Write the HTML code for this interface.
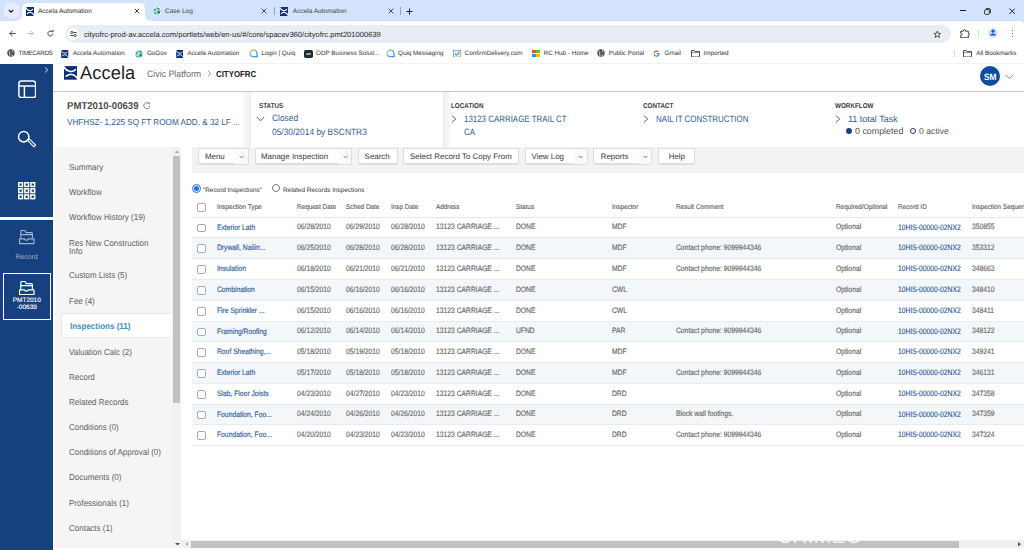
<!DOCTYPE html>
<html><head><meta charset="utf-8">
<style>
*{margin:0;padding:0;box-sizing:border-box}
html,body{width:1024px;height:550px;overflow:hidden;background:#fff;font-family:"Liberation Sans",sans-serif;position:relative;text-rendering:geometricPrecision}
.a{position:absolute;white-space:nowrap}
/* chrome */
#tabs{position:absolute;left:0;top:0;width:1024px;height:25px;background:#d3e3fd}
#toolbar{position:absolute;left:0;top:21px;width:1024px;height:22px;background:#fff;border-radius:0 4px 0 0}
#bm{position:absolute;left:0;top:43px;width:1024px;height:21px;background:#fff}
.tt{font-size:6.5px;color:#1f1f1f;top:8px}
.bt{font-size:6.3px;color:#333;margin-top:0.5px}
/* app */
#side{position:absolute;left:0;top:64px;width:53px;height:486px;background:#17407e}
#hdr{position:absolute;left:53px;top:64px;width:971px;height:28px;background:#fff;border-bottom:1px solid #c8c9d1}
#nav{position:absolute;left:55px;top:147px;width:126.2px;height:401px;background:#f5f5f5}
.nv{font-size:8.7px;color:#5e5e5e;transform:scaleX(0.92);transform-origin:0 0;margin-top:-0.2px}
.lbl{font-size:7px;font-weight:bold;color:#3a3a3a;transform:scaleX(0.9);transform-origin:0 0}
.hv{font-size:9.2px;transform-origin:0 0}
.lnk,.cell.lnk{color:#2f5d98}
.cell.lnk{margin-top:0.3px}
.btn{position:absolute;top:148px;height:17px;background:#fff;border:1px solid #d9d9d9;border-radius:1px;font-size:7.2px;color:#333;line-height:15px;padding-left:9px}
.th{-webkit-text-stroke:0.12px currentColor;font-size:6.8px;color:#606060;top:203.8px;transform:scaleX(0.94);transform-origin:0 0}
.row{position:absolute;left:192px;width:832px;height:20.8px;border-bottom:1px solid #e8ebef}
.row.alt{background:#f4f7fa}
.cell{-webkit-text-stroke:0.15px currentColor;position:absolute;font-size:7.9px;color:#666;white-space:nowrap;top:4.8px;transform:scaleX(0.855);transform-origin:0 0}
.cb{position:absolute;left:5px;top:6px;width:9px;height:8.8px;border:1.2px solid #ababab;border-radius:2px;background:#fff}
</style></head><body>

<div id="tabs">
  <div class="a" style="left:3.5px;top:3px;width:15px;height:15px;border-radius:5px;background:#e6eefc"></div>
  <svg class="a" style="left:7px;top:7px" width="8" height="8" viewBox="0 0 8 8"><path d="M1.8 3 L4 5.2 L6.2 3" fill="none" stroke="#1f1f1f" stroke-width="1.1"/></svg>
  <svg class="a" style="left:14px;top:0" width="140" height="21" viewBox="0 0 140 21"><path d="M0 21 Q8 21 8 15 L8 9 Q8 3 14 3 L125 3 Q131 3 131 9 L131 15 Q131 21 139 21 Z" fill="#fff"/></svg>
  <svg class="a" style="left:26px;top:6.5px" width="8" height="9" viewBox="0 0 8 9"><rect width="8" height="9" fill="#0e2f7a"/><path d="M-0.3 0.3 C1.4 3.8, 4.9 4.7, 7 2.1 M1 6.9 C3.1 4.3, 6.6 5.2, 8.3 8.7" stroke="#fff" stroke-width="1.1" fill="none"/></svg>
  <div class="a tt" style="left:38px">Accela Automation</div>
  <svg class="a" style="left:133.5px;top:8px" width="6" height="6" viewBox="0 0 6 6"><path d="M0.8 0.8 L5.2 5.2 M5.2 0.8 L0.8 5.2" stroke="#1f1f1f" stroke-width="0.85"/></svg>
  <svg class="a" style="left:152.8px;top:6.7px" width="8" height="8" viewBox="0 0 8 8"><rect x="0" y="0" width="8" height="8" fill="#fff" rx="0.8"/><circle cx="4" cy="4" r="3.7" fill="#8fcfc4"/><ellipse cx="2.2" cy="3.3" rx="1.2" ry="1.1" fill="#18897a"/><ellipse cx="5.2" cy="1.9" rx="1.1" ry="0.8" fill="#18897a"/><ellipse cx="5.6" cy="5.2" rx="1.3" ry="1.2" fill="#0f7a6b"/><ellipse cx="2.6" cy="6.3" rx="1.2" ry="0.8" fill="#18897a"/><path d="M5 3.2 A1.6 1.6 0 1 0 4.6 5.8" stroke="#fff" stroke-width="0.9" fill="none"/></svg>
  <div class="a tt" style="left:165px;color:#3c3c3c">Case Log</div>
  <svg class="a" style="left:261px;top:8px" width="6" height="6" viewBox="0 0 6 6"><path d="M0.6 0.6 L5.4 5.4 M5.4 0.6 L0.6 5.4" stroke="#3c3c3c" stroke-width="0.9"/></svg>
  <div class="a" style="left:273.5px;top:7px;width:1px;height:8px;background:#8aa6d8"></div>
  <svg class="a" style="left:280px;top:6.5px" width="8" height="9" viewBox="0 0 8 9"><rect width="8" height="9" fill="#0e2f7a"/><path d="M-0.3 0.3 C1.4 3.8, 4.9 4.7, 7 2.1 M1 6.9 C3.1 4.3, 6.6 5.2, 8.3 8.7" stroke="#fff" stroke-width="1.1" fill="none"/></svg>
  <div class="a tt" style="left:292.8px;color:#3c3c3c">Accela Automation</div>
  <svg class="a" style="left:387.5px;top:8px" width="6" height="6" viewBox="0 0 6 6"><path d="M0.6 0.6 L5.4 5.4 M5.4 0.6 L0.6 5.4" stroke="#3c3c3c" stroke-width="0.9"/></svg>
  <div class="a" style="left:400px;top:7px;width:1px;height:8px;background:#8aa6d8"></div>
  <svg class="a" style="left:406px;top:7.5px" width="7" height="7" viewBox="0 0 7 7"><path d="M3.5 0.5 L3.5 6.5 M0.5 3.5 L6.5 3.5" stroke="#1f1f1f" stroke-width="1"/></svg>
  <div class="a" style="left:960px;top:10.2px;width:6px;height:1px;background:#1f1f1f"></div>
  <svg class="a" style="left:984px;top:8px" width="7" height="7" viewBox="0 0 7 7"><rect x="0.6" y="1.6" width="4.8" height="4.8" rx="1" fill="none" stroke="#1f1f1f" stroke-width="0.9"/><path d="M2 0.6 L5 0.6 Q6.4 0.6 6.4 2 L6.4 5" fill="none" stroke="#1f1f1f" stroke-width="0.9"/></svg>
  <svg class="a" style="left:1008.5px;top:8px" width="6.5" height="6.5" viewBox="0 0 6 6"><path d="M0.4 0.4 L5.6 5.6 M5.6 0.4 L0.4 5.6" stroke="#1f1f1f" stroke-width="0.9"/></svg>
</div>
<div id="toolbar">
  <svg class="a" style="left:8.5px;top:9px" width="7" height="7" viewBox="0 0 7 7"><path d="M6.6 3.5 L0.8 3.5 M3.5 0.8 L0.8 3.5 L3.5 6.2" fill="none" stroke="#3c3c3c" stroke-width="0.9"/></svg>
  <svg class="a" style="left:27.3px;top:9px" width="7" height="7" viewBox="0 0 7 7"><path d="M0.4 3.5 L6.2 3.5 M3.5 0.8 L6.2 3.5 L3.5 6.2" fill="none" stroke="#b4b4b4" stroke-width="0.9"/></svg>
  <svg class="a" style="left:46.8px;top:9px" width="7" height="7" viewBox="0 0 7 7"><path d="M5.9 3.6 A2.5 2.5 0 1 1 5.2 1.8" fill="none" stroke="#3c3c3c" stroke-width="0.95"/><path d="M4.1 1.3 L6.3 1.3 L6.3 -0.8" fill="none" stroke="#3c3c3c" stroke-width="0.95"/></svg>
  <div class="a" style="left:64.5px;top:3.6px;width:886px;height:18.2px;border-radius:9.1px;background:#e9eef6"></div>
  <div class="a" style="left:67.4px;top:6.8px;width:11.8px;height:11.8px;border-radius:6px;background:#fff"></div>
  <svg class="a" style="left:70px;top:9.8px" width="7" height="6" viewBox="0 0 7 6"><path d="M3.2 1.5 L6.7 1.5 M0.3 4.5 L3.8 4.5" stroke="#1f1f1f" stroke-width="0.8"/><circle cx="1.8" cy="1.5" r="1.1" fill="none" stroke="#1f1f1f" stroke-width="0.8"/><circle cx="5.2" cy="4.5" r="1.1" fill="none" stroke="#1f1f1f" stroke-width="0.8"/></svg>
  <div class="a" style="left:84px;top:8.8px;font-size:7.58px;color:#1f1f1f">cityofrc-prod-av.accela.com/portlets/web/en-us/#/core/spacev360/cityofrc.pmt201000639</div>
  <svg class="a" style="left:933.4px;top:8.8px" width="8.6" height="8.6" viewBox="0 0 24 24"><path d="M12 2.8 L14.6 9.2 L21.4 9.6 L16.2 14 L17.8 20.8 L12 17.1 L6.2 20.8 L7.8 14 L2.6 9.6 L9.4 9.2 Z" fill="none" stroke="#333" stroke-width="2.3" stroke-linejoin="round"/></svg>
  <svg class="a" style="left:959.6px;top:7.6px" width="10" height="9.5" viewBox="0 0 10 9.5"><path d="M0.7 2.2 L3.4 2.2 Q3.4 0.6 4.5 0.6 Q5.6 0.6 5.6 2.2 L8.3 2.2 L8.3 4.2 Q9.5 4.2 9.5 5.1 Q9.5 6 8.3 6 L8.3 8.8 L0.7 8.8 L0.7 6.4 Q2 6.4 2 5.4 Q2 4.4 0.7 4.4 Z" fill="none" stroke="#333" stroke-width="0.95" stroke-linejoin="round"/></svg>
  <div class="a" style="left:978.3px;top:8.6px;width:1px;height:8px;background:#c7d7f0"></div>
  <div class="a" style="left:987.8px;top:6.9px;width:10.5px;height:10.5px;border-radius:6px;background:#d3e3fd"></div>
  <svg class="a" style="left:989.1px;top:8.4px" width="8" height="8" viewBox="0 0 8 8"><circle cx="4" cy="2.2" r="1.6" fill="#0b57d0"/><path d="M1.2 6.6 Q1.2 4.5 4 4.5 Q6.8 4.5 6.8 6.6 Z" fill="#0b57d0"/></svg>
  <div class="a" style="left:1011.6px;top:8.7px;width:1.4px;height:1.4px;border-radius:1px;background:#333"></div>
  <div class="a" style="left:1011.6px;top:11.8px;width:1.4px;height:1.4px;border-radius:1px;background:#333"></div>
  <div class="a" style="left:1011.6px;top:14.9px;width:1.4px;height:1.4px;border-radius:1px;background:#333"></div>
</div>
<div id="bm">
<svg class="a" style="left:6.8px;top:6.3px" width="8" height="8" viewBox="0 0 8 8"><circle cx="4" cy="4" r="3.7" fill="#4a4d52"/><path d="M1.6 1.8 Q3.4 2.6 2.8 4 Q2.2 5 3 6.8 M5.6 1.1 Q5 2.6 6.6 3.3 M4.4 5.2 Q5.6 5.6 5.3 7.2" stroke="#fff" stroke-width="0.75" fill="none"/></svg><div class="a bt" style="left:18.5px;top:6.5px;letter-spacing:-0.35px">TIMECARDS</div><svg class="a" style="left:61.3px;top:6.5px" width="7.5" height="8" viewBox="0 0 8 9"><rect width="8" height="9" fill="#0e2f7a"/><path d="M-0.3 0.3 C1.4 3.8, 4.9 4.7, 7 2.1 M1 6.9 C3.1 4.3, 6.6 5.2, 8.3 8.7" stroke="#fff" stroke-width="1.1" fill="none"/></svg><div class="a bt" style="left:72.7px;top:6.5px">Accela Automation</div><svg class="a" style="left:135.3px;top:6.5px" width="8" height="8" viewBox="0 0 8 8"><rect x="0" y="0" width="8" height="8" fill="#fff" rx="0.8"/><circle cx="4" cy="4" r="3.7" fill="#8fcfc4"/><ellipse cx="2.2" cy="3.3" rx="1.2" ry="1.1" fill="#18897a"/><ellipse cx="5.2" cy="1.9" rx="1.1" ry="0.8" fill="#18897a"/><ellipse cx="5.6" cy="5.2" rx="1.3" ry="1.2" fill="#0f7a6b"/><ellipse cx="2.6" cy="6.3" rx="1.2" ry="0.8" fill="#18897a"/><path d="M5 3.2 A1.6 1.6 0 1 0 4.6 5.8" stroke="#fff" stroke-width="0.9" fill="none"/></svg><div class="a bt" style="left:146.9px;top:6.5px">GoGov</div><svg class="a" style="left:175.8px;top:6.5px" width="7.5" height="8" viewBox="0 0 8 9"><rect width="8" height="9" fill="#0e2f7a"/><path d="M-0.3 0.3 C1.4 3.8, 4.9 4.7, 7 2.1 M1 6.9 C3.1 4.3, 6.6 5.2, 8.3 8.7" stroke="#fff" stroke-width="1.1" fill="none"/></svg><div class="a bt" style="left:187.2px;top:6.5px">Accela Automation</div><svg class="a" style="left:249px;top:6.3px" width="9" height="9" viewBox="0 0 9 9"><defs><linearGradient id="qg249" x1="0" y1="0" x2="1" y2="1"><stop offset="0" stop-color="#f6c945"/><stop offset="0.5" stop-color="#3ec6e0"/><stop offset="1" stop-color="#3b82f6"/></linearGradient></defs><path d="M4.3 1 A3.3 3.3 0 1 0 4.3 7.6 L8 7.6 L8 4.3 A3.7 3.7 0 0 0 4.3 1 Z" fill="none" stroke="url(#qg249)" stroke-width="1.3"/></svg><div class="a bt" style="left:261.3px;top:6.5px">Login | Quiq</div><div class="a" style="left:304.2px;top:6.6px;width:8.4px;height:8.2px;border-radius:1.8px;background:#1b2b4d"></div><div class="a" style="left:305.6px;top:9.7px;width:5.6px;height:2px;background:#c9a227;border-radius:1px"></div><div class="a bt" style="left:316px;top:6.5px">ODP Business Soluti...</div><svg class="a" style="left:385.6px;top:6.3px" width="9" height="9" viewBox="0 0 9 9"><defs><linearGradient id="qg385" x1="0" y1="0" x2="1" y2="1"><stop offset="0" stop-color="#f6c945"/><stop offset="0.5" stop-color="#3ec6e0"/><stop offset="1" stop-color="#3b82f6"/></linearGradient></defs><path d="M4.3 1 A3.3 3.3 0 1 0 4.3 7.6 L8 7.6 L8 4.3 A3.7 3.7 0 0 0 4.3 1 Z" fill="none" stroke="url(#qg385)" stroke-width="1.3"/></svg><div class="a bt" style="left:398px;top:6.5px">Quiq Messaging</div><svg class="a" style="left:452.6px;top:6.8px" width="8.2" height="7.5" viewBox="0 0 8 7.5"><rect x="0.4" y="0.4" width="7.2" height="6.7" fill="#e8f0fb" stroke="#6b8fc7" stroke-width="0.7"/><path d="M1.8 3.6 L3.5 5.2 L6.4 1.8" fill="none" stroke="#1a7f3c" stroke-width="1"/></svg><div class="a bt" style="left:464.6px;top:6.5px">ConfirmDelivery.com</div><div class="a" style="left:532px;top:6.5px;width:3.8px;height:3.8px;background:#f25022"></div><div class="a" style="left:536.2px;top:6.5px;width:3.8px;height:3.8px;background:#7fba00"></div><div class="a" style="left:532px;top:10.7px;width:3.8px;height:3.8px;background:#00a4ef"></div><div class="a" style="left:536.2px;top:10.7px;width:3.8px;height:3.8px;background:#ffb900"></div><div class="a bt" style="left:543.7px;top:6.5px">RC Hub - Home</div><svg class="a" style="left:597.4px;top:6.3px" width="8" height="8" viewBox="0 0 8 8"><circle cx="4" cy="4" r="3.7" fill="#4a4d52"/><path d="M1.6 1.8 Q3.4 2.6 2.8 4 Q2.2 5 3 6.8 M5.6 1.1 Q5 2.6 6.6 3.3 M4.4 5.2 Q5.6 5.6 5.3 7.2" stroke="#fff" stroke-width="0.75" fill="none"/></svg><div class="a bt" style="left:608.8px;top:6.5px">Public Portal</div><svg class="a" style="left:653.3px;top:6.8px" width="7.2" height="7.2" viewBox="0 0 24 24"><path d="M22 12.2c0-.8-.1-1.5-.2-2.2H12v4.2h5.6c-.2 1.3-1 2.5-2.1 3.2v2.7h3.4c2-1.8 3.1-4.6 3.1-7.9z" fill="#4285f4"/><path d="M12 22.5c2.8 0 5.2-.9 6.9-2.5l-3.4-2.7c-.9.6-2.1 1-3.5 1-2.7 0-5-1.8-5.8-4.3H2.7v2.8C4.4 20.1 7.9 22.5 12 22.5z" fill="#34a853"/><path d="M6.2 14c-.2-.6-.3-1.3-.3-2s.1-1.4.3-2V7.2H2.7C2 8.6 1.5 10.3 1.5 12s.4 3.4 1.2 4.8L6.2 14z" fill="#fbbc05"/><path d="M12 5.8c1.5 0 2.9.5 4 1.6l3-3C17.2 2.6 14.8 1.5 12 1.5 7.9 1.5 4.4 3.9 2.7 7.2L6.2 10C7 7.6 9.3 5.8 12 5.8z" fill="#ea4335"/></svg><div class="a bt" style="left:664.5px;top:6.5px">Gmail</div><svg class="a" style="left:690.7px;top:6.8px" width="9" height="7.5" viewBox="0 0 9 7.5"><path d="M0.5 0.5 L3.3 0.5 L4.2 1.5 L8.5 1.5 L8.5 7 L0.5 7 Z" fill="none" stroke="#3c3c3c" stroke-width="0.9" stroke-linejoin="round"/><path d="M0.5 2.4 L8.5 2.4" stroke="#3c3c3c" stroke-width="0.6"/></svg><div class="a bt" style="left:703.6px;top:6.5px">Imported</div><div class="a" style="left:954px;top:6.5px;width:1px;height:7.5px;background:#c7d7f0"></div><svg class="a" style="left:962.9px;top:6.8px" width="9" height="7.5" viewBox="0 0 9 7.5"><path d="M0.5 0.5 L3.3 0.5 L4.2 1.5 L8.5 1.5 L8.5 7 L0.5 7 Z" fill="none" stroke="#3c3c3c" stroke-width="0.9" stroke-linejoin="round"/><path d="M0.5 2.4 L8.5 2.4" stroke="#3c3c3c" stroke-width="0.6"/></svg><div class="a bt" style="left:976.2px;top:6.5px">All Bookmarks</div>
</div>


<div id="side">
  <svg class="a" style="left:43.5px;top:3.3px" width="5" height="6" viewBox="0 0 5 6"><path d="M1 0.5 L3.8 3 L1 5.5" fill="none" stroke="#dfe6f2" stroke-width="0.9"/></svg>
  <svg class="a" style="left:17.5px;top:15.8px" width="18.5" height="18.5" viewBox="0 0 18.5 18.5"><rect x="0.9" y="0.9" width="16.7" height="16.7" rx="2.6" fill="none" stroke="#fff" stroke-width="1.5"/><path d="M0.9 6 L17.6 6 M6.4 6 L6.4 17.6" stroke="#fff" stroke-width="1.5"/></svg>
  <svg class="a" style="left:17px;top:66px" width="20" height="20" viewBox="0 0 20 20"><circle cx="6.7" cy="6.7" r="5.2" fill="none" stroke="#fff" stroke-width="1.5"/><path d="M10.6 10.3 L12.3 8.8 L18.6 15.2 L16.9 16.8 Z" fill="none" stroke="#fff" stroke-width="1.1" stroke-linejoin="round"/></svg>
  <svg class="a" style="left:17.9px;top:117.6px" width="18" height="18" viewBox="0 0 18 18"><rect x="0.75" y="0.75" width="3.7" height="3.7" fill="none" stroke="#fff" stroke-width="1.5"/><rect x="6.85" y="0.75" width="3.7" height="3.7" fill="none" stroke="#fff" stroke-width="1.5"/><rect x="12.95" y="0.75" width="3.7" height="3.7" fill="none" stroke="#fff" stroke-width="1.5"/><rect x="0.75" y="6.85" width="3.7" height="3.7" fill="none" stroke="#fff" stroke-width="1.5"/><rect x="6.85" y="6.85" width="3.7" height="3.7" fill="none" stroke="#fff" stroke-width="1.5"/><rect x="12.95" y="6.85" width="3.7" height="3.7" fill="none" stroke="#fff" stroke-width="1.5"/><rect x="0.75" y="12.95" width="3.7" height="3.7" fill="none" stroke="#fff" stroke-width="1.5"/><rect x="6.85" y="12.95" width="3.7" height="3.7" fill="none" stroke="#fff" stroke-width="1.5"/><rect x="12.95" y="12.95" width="3.7" height="3.7" fill="none" stroke="#fff" stroke-width="1.5"/></svg>
  <div class="a" style="left:0;top:152.5px;width:53px;height:3.2px;background:#fff"></div>
  <svg class="a" style="left:19px;top:166px" width="16" height="14.5" viewBox="0 0 16 14.5"><path d="M1.8 8.4 L1.8 1.6 Q1.8 0.5 3 0.5 L6 0.5 L7 2.6 L12.4 2.6 Q13.4 2.6 13.4 3.6 L13.4 8.4 M1.8 4.6 L13.4 4.6" fill="none" stroke="#a3b3cf" stroke-width="1.15" stroke-linejoin="round"/><path d="M0.5 8.8 L5.4 8.8 Q7.4 11.6 9.4 8.8 L15 8.8 L15 13.6 L0.5 13.6 Z" fill="none" stroke="#a3b3cf" stroke-width="1.15" stroke-linejoin="round"/></svg>
  <div class="a" style="left:0;width:53px;top:189.5px;text-align:center;font-size:6.9px;color:#a7b5cd">Record</div>
  <div class="a" style="left:2.6px;top:208.6px;width:48.4px;height:47.2px;border:1.7px solid #fff"></div>
  <svg class="a" style="left:19px;top:216.6px" width="16" height="14.5" viewBox="0 0 16 14.5"><path d="M1.8 8.4 L1.8 1.6 Q1.8 0.5 3 0.5 L6 0.5 L7 2.6 L12.4 2.6 Q13.4 2.6 13.4 3.6 L13.4 8.4 M1.8 4.6 L13.4 4.6" fill="none" stroke="#fff" stroke-width="1.2" stroke-linejoin="round"/><path d="M0.5 8.8 L5.4 8.8 Q7.4 11.6 9.4 8.8 L15 8.8 L15 13.6 L0.5 13.6 Z" fill="none" stroke="#fff" stroke-width="1.2" stroke-linejoin="round"/></svg>
  <div class="a" style="left:0;width:53.5px;top:234.3px;text-align:center;font-size:6.5px;line-height:6.3px;color:#fff;-webkit-text-stroke:0.12px #fff">PMT2010<br>-00639</div>
</div>
<div class="a" style="left:53px;top:64px;width:2px;height:486px;background:#fff"></div>
<div id="hdr">
  <svg class="a" style="left:10.6px;top:2px" width="13.6" height="13.8" viewBox="0 0 14 14"><defs><clipPath id="lc"><rect width="14" height="14"/></clipPath></defs><rect width="14" height="14" fill="#0e2f7a"/><g clip-path="url(#lc)"><path d="M-0.5 0.4 C2.5 5.8, 8.5 7.2, 12.2 3.2 M1.8 10.8 C5.5 6.8, 11.5 8.2, 14.5 13.6" fill="none" stroke="#fff" stroke-width="1.7"/></g></svg>
  <div class="a" style="left:27.1px;top:-1.9px;font-size:18.6px;color:#1e1e1e;letter-spacing:0.1px;transform:scaleX(0.98);transform-origin:0 0">Accela</div>
  <div class="a" style="left:94px;top:5px;font-size:9.3px;color:#6a6a6a;transform:scaleX(0.945);transform-origin:0 0">Civic Platform</div>
  <svg class="a" style="left:154px;top:6.3px" width="5" height="7" viewBox="0 0 5 7"><path d="M1 0.8 L3.8 3.5 L1 6.2" fill="none" stroke="#777" stroke-width="0.8"/></svg>
  <div class="a" style="left:163px;top:5.4px;font-size:8.7px;font-weight:bold;color:#222;transform:scaleX(0.905);transform-origin:0 0">CITYOFRC</div>
  <div class="a" style="left:926.9px;top:2px;width:19.8px;height:19.8px;border-radius:10px;background:#0e4c9f"></div>
  <div class="a" style="left:930.6px;top:7.6px;font-size:9.2px;font-weight:bold;color:#fff;transform:scaleX(0.913);transform-origin:0 0">SM</div>
  <svg class="a" style="left:951.9px;top:10px" width="9" height="6" viewBox="0 0 9 6"><path d="M0.8 1 L4.4 4.4 L8 1" fill="none" stroke="#777" stroke-width="0.85"/></svg>
</div>
<!-- record header -->
<div class="a" style="left:67px;top:101.4px;font-size:9.9px;font-weight:bold;color:#4d4d4d;transform:scaleX(0.972);transform-origin:0 0">PMT2010-00639</div>
<svg class="a" style="left:142.6px;top:102.4px" width="8" height="7.5" viewBox="0 0 8 7.5"><path d="M6.3 2 A3 3 0 1 0 6.8 3.9" fill="none" stroke="#5a6f92" stroke-width="0.9"/><path d="M5.2 1.3 L6.6 1.9 L6.6 0.4" fill="none" stroke="#5a6f92" stroke-width="0.7"/></svg>
<div class="a lnk" style="left:67px;top:117.1px;font-size:8.7px;transform:scaleX(0.938);transform-origin:0 0">VHFHSZ- 1,225 SQ FT ROOM ADD, &amp; 32 LF ...</div>
<div class="a" style="left:241px;top:92px;width:9.5px;height:55px;background:linear-gradient(90deg,rgba(0,0,0,0),rgba(0,0,0,0.07))"></div>
<div class="a" style="left:442.8px;top:92px;width:9px;height:55px;background:linear-gradient(90deg,rgba(0,0,0,0.07),rgba(0,0,0,0))"></div>
<div class="a lbl" style="left:259px;top:102.6px">STATUS</div>
<svg class="a" style="left:256.1px;top:115.8px" width="9" height="6" viewBox="0 0 9 6"><path d="M0.7 0.8 L4.5 4.8 L8.3 0.8" fill="none" stroke="#2f5d98" stroke-width="0.9"/></svg>
<div class="a lnk hv" style="left:271.8px;top:113px;transform:scaleX(0.915)">Closed</div>
<div class="a lnk hv" style="left:271.8px;top:126.6px;transform:scaleX(0.915)">05/30/2014 by BSCNTR3</div>
<div class="a lbl" style="left:451px;top:102.6px">LOCATION</div>
<svg class="a" style="left:450.5px;top:114.8px" width="6" height="8" viewBox="0 0 6 8"><path d="M0.8 0.7 L4.8 4 L0.8 7.3" fill="none" stroke="#2f5d98" stroke-width="0.9"/></svg>
<div class="a lnk hv" style="left:464px;top:113.8px;transform:scaleX(0.862)">13123 CARRIAGE TRAIL CT</div>
<div class="a lnk hv" style="left:464px;top:126.7px;transform:scaleX(0.862)">CA</div>
<div class="a lbl" style="left:643px;top:102.6px">CONTACT</div>
<svg class="a" style="left:642.5px;top:114.8px" width="6" height="8" viewBox="0 0 6 8"><path d="M0.8 0.7 L4.8 4 L0.8 7.3" fill="none" stroke="#2f5d98" stroke-width="0.9"/></svg>
<div class="a lnk hv" style="left:656px;top:113.8px;transform:scaleX(0.862)">NAIL IT CONSTRUCTION</div>
<div class="a lbl" style="left:835px;top:102.6px">WORKFLOW</div>
<svg class="a" style="left:834.5px;top:114.5px" width="6" height="8" viewBox="0 0 6 8"><path d="M0.8 0.7 L4.8 4 L0.8 7.3" fill="none" stroke="#2f5d98" stroke-width="0.9"/></svg>
<div class="a lnk" style="left:848px;top:113.5px;font-size:9px">11 total Task</div>
<div class="a" style="left:845.6px;top:128.3px;width:6.2px;height:6.2px;border-radius:4px;background:#16407f"></div>
<div class="a" style="left:855px;top:126.3px;font-size:8.9px;color:#555">0 completed</div>
<div class="a" style="left:910px;top:128.3px;width:6.2px;height:6.2px;border-radius:4px;border:1.2px solid #16407f"></div>
<div class="a" style="left:919px;top:126.3px;font-size:8.7px;color:#555">0 active</div>

<div id="nav">
<div class="a" style="left:6.3px;top:166.4px;width:112px;height:24.6px;background:#fff;border:1px solid #e8e8e8;border-right:none;border-radius:2px 0 0 2px"></div>
<div class="a nv" style="left:14.3px;top:15.1px">Summary</div>
<div class="a nv" style="left:14.3px;top:40.2px">Workflow</div>
<div class="a nv" style="left:14.3px;top:65.3px">Workflow History (19)</div>
<div class="a nv" style="left:14.3px;top:91.9px;line-height:8px">Res New Construction<br>Info</div>
<div class="a nv" style="left:14.3px;top:123.6px">Custom Lists (5)</div>
<div class="a nv" style="left:14.3px;top:148.7px">Fee (4)</div>
<div class="a nv" style="left:14.3px;top:199.7px">Valuation Calc (2)</div>
<div class="a nv" style="left:14.3px;top:224.8px">Record</div>
<div class="a nv" style="left:14.3px;top:250.3px">Related Records</div>
<div class="a nv" style="left:14.3px;top:275.4px">Conditions (0)</div>
<div class="a nv" style="left:14.3px;top:300.5px">Conditions of Approval (0)</div>
<div class="a nv" style="left:14.3px;top:325.6px">Documents (0)</div>
<div class="a nv" style="left:14.3px;top:350.7px">Professionals (1)</div>
<div class="a nv" style="left:14.3px;top:375.8px">Contacts (1)</div>
<div class="a nv" style="left:14.8px;top:174.1px;font-weight:bold;color:#3d8fc9">Inspections (11)</div>
<div class="a" style="left:117.2px;top:0;width:9px;height:401px;background:#f1f1f1"></div>
<div class="a" style="left:118.2px;top:9.3px;width:7px;height:247px;background:#c1c1c1"></div>
<svg class="a" style="left:119.5px;top:3px" width="4" height="3" viewBox="0 0 4 3"><path d="M0 3 L2 0.5 L4 3 Z" fill="#a3a3a3"/></svg>
<svg class="a" style="left:119.6px;top:395.5px" width="5" height="3" viewBox="0 0 5 3"><path d="M0 0 L2.5 2.5 L5 0 Z" fill="#505050"/></svg>
</div>

<div class="a" style="left:192px;top:147.3px;width:832px;height:25.7px;background:#f3f3f3"></div>
<div class="a" style="left:198px;top:147.5px;width:50.6px;height:16.8px;background:#fff;border:1px solid #dedede;box-shadow:0 0.6px 1px rgba(0,0,0,0.09)"></div><div class="a" style="left:204.9px;top:151.7px;font-size:7.95px;color:#3a3a3a">Menu</div><div class="a" style="left:235.1px;top:148.8px;width:12.5px;height:14.8px;background:#fafafa"></div><svg class="a" style="left:239.29999999999998px;top:154.5px" width="5" height="4" viewBox="0 0 5 4"><path d="M0.6 0.9 L2.5 2.8 L4.4 0.9" fill="none" stroke="#555" stroke-width="0.8"/></svg>
<div class="a" style="left:254.7px;top:147.5px;width:97.3px;height:16.8px;background:#fff;border:1px solid #dedede;box-shadow:0 0.6px 1px rgba(0,0,0,0.09)"></div><div class="a" style="left:261px;top:151.7px;font-size:7.95px;color:#3a3a3a">Manage Inspection</div><div class="a" style="left:338.5px;top:148.8px;width:12.5px;height:14.8px;background:#fafafa"></div><svg class="a" style="left:342.7px;top:154.5px" width="5" height="4" viewBox="0 0 5 4"><path d="M0.6 0.9 L2.5 2.8 L4.4 0.9" fill="none" stroke="#555" stroke-width="0.8"/></svg>
<div class="a" style="left:358px;top:147.5px;width:39.5px;height:16.8px;background:#fff;border:1px solid #dedede;box-shadow:0 0.6px 1px rgba(0,0,0,0.09)"></div><div class="a" style="left:364.6px;top:151.7px;font-size:7.95px;color:#3a3a3a">Search</div>
<div class="a" style="left:403px;top:147.5px;width:115.8px;height:16.8px;background:#fff;border:1px solid #dedede;box-shadow:0 0.6px 1px rgba(0,0,0,0.09)"></div><div class="a" style="left:410px;top:151.7px;font-size:7.95px;color:#3a3a3a">Select Record To Copy From</div>
<div class="a" style="left:524.5px;top:147.5px;width:63.2px;height:16.8px;background:#fff;border:1px solid #dedede;box-shadow:0 0.6px 1px rgba(0,0,0,0.09)"></div><div class="a" style="left:531.5px;top:151.7px;font-size:7.95px;color:#3a3a3a">View Log</div><div class="a" style="left:574.2px;top:148.8px;width:12.5px;height:14.8px;background:#fafafa"></div><svg class="a" style="left:578.4000000000001px;top:154.5px" width="5" height="4" viewBox="0 0 5 4"><path d="M0.6 0.9 L2.5 2.8 L4.4 0.9" fill="none" stroke="#555" stroke-width="0.8"/></svg>
<div class="a" style="left:593.4px;top:147.5px;width:58.6px;height:16.8px;background:#fff;border:1px solid #dedede;box-shadow:0 0.6px 1px rgba(0,0,0,0.09)"></div><div class="a" style="left:600.7px;top:151.7px;font-size:7.95px;color:#3a3a3a">Reports</div><div class="a" style="left:638.5px;top:148.8px;width:12.5px;height:14.8px;background:#fafafa"></div><svg class="a" style="left:642.7px;top:154.5px" width="5" height="4" viewBox="0 0 5 4"><path d="M0.6 0.9 L2.5 2.8 L4.4 0.9" fill="none" stroke="#555" stroke-width="0.8"/></svg>
<div class="a" style="left:658px;top:147.5px;width:37.0px;height:16.8px;background:#fff;border:1px solid #dedede;box-shadow:0 0.6px 1px rgba(0,0,0,0.09)"></div><div class="a" style="left:668.7px;top:151.7px;font-size:7.95px;color:#3a3a3a">Help</div>
<div class="a" style="left:192.2px;top:184.2px;width:8.4px;height:8.4px;border-radius:5px;border:1.2px solid #1a73e8;background:#fff"></div><div class="a" style="left:194px;top:186px;width:4.8px;height:4.8px;border-radius:3px;background:#1a73e8"></div>
<div class="a" style="left:202.5px;top:186.9px;font-size:6.5px;color:#333;transform:scaleX(0.98);transform-origin:0 0">"Record Inspections"</div>
<div class="a" style="left:272px;top:183.8px;width:8.4px;height:8.4px;border-radius:5px;border:0.9px solid #767676;background:#fff"></div>
<div class="a" style="left:282.7px;top:186.9px;font-size:6.5px;color:#333;transform:scaleX(0.98);transform-origin:0 0">Related Records Inspections</div>
<div class="a" style="left:192px;top:196px;width:832px;height:22.2px;border-bottom:1px solid #e8e8e8"></div>
<div class="cb" style="left:197.2px;top:202.8px"></div>
<div class="a th" style="left:216.7px">Inspection Type</div><div class="a th" style="left:296.6px">Request Date</div><div class="a th" style="left:346.2px">Sched Date</div><div class="a th" style="left:391.2px">Insp Date</div><div class="a th" style="left:436px">Address</div><div class="a th" style="left:516px">Status</div><div class="a th" style="left:612.1px">Inspector</div><div class="a th" style="left:676.1px">Result Comment</div><div class="a th" style="left:836px">Required/Optional</div><div class="a th" style="left:898.4px">Record ID</div><div class="a th" style="left:972.2px">Inspection Sequence</div>
<div class="row" style="top:217.60px"><div class="cb"></div><div class="cell lnk" style="left:24.7px">Exterior Lath</div><div class="cell" style="left:104.6px">06/28/2010</div><div class="cell" style="left:154.2px">06/29/2010</div><div class="cell" style="left:199.2px">06/28/2010</div><div class="cell" style="left:244.0px">13123 CARRIAGE ...</div><div class="cell" style="left:324.0px">DONE</div><div class="cell" style="left:420.1px">MDF</div><div class="cell" style="left:484.1px"></div><div class="cell" style="left:644.0px">Optional</div><div class="cell lnk" style="left:706.4px">10HIS-00000-02NX2</div><div class="cell" style="left:780.2px">350855</div></div>
<div class="row alt" style="top:238.38px"><div class="cb"></div><div class="cell lnk" style="left:24.7px">Drywall, Nailin...</div><div class="cell" style="left:104.6px">06/25/2010</div><div class="cell" style="left:154.2px">06/28/2010</div><div class="cell" style="left:199.2px">06/28/2010</div><div class="cell" style="left:244.0px">13123 CARRIAGE ...</div><div class="cell" style="left:324.0px">DONE</div><div class="cell" style="left:420.1px">MDF</div><div class="cell" style="left:484.1px">Contact phone: 9099944346</div><div class="cell" style="left:644.0px">Optional</div><div class="cell lnk" style="left:706.4px">10HIS-00000-02NX2</div><div class="cell" style="left:780.2px">353312</div></div>
<div class="row" style="top:259.16px"><div class="cb"></div><div class="cell lnk" style="left:24.7px">Insulation</div><div class="cell" style="left:104.6px">06/18/2010</div><div class="cell" style="left:154.2px">06/21/2010</div><div class="cell" style="left:199.2px">06/21/2010</div><div class="cell" style="left:244.0px">13123 CARRIAGE ...</div><div class="cell" style="left:324.0px">DONE</div><div class="cell" style="left:420.1px">MDF</div><div class="cell" style="left:484.1px">Contact phone: 9099944346</div><div class="cell" style="left:644.0px">Optional</div><div class="cell lnk" style="left:706.4px">10HIS-00000-02NX2</div><div class="cell" style="left:780.2px">348663</div></div>
<div class="row alt" style="top:279.94px"><div class="cb"></div><div class="cell lnk" style="left:24.7px">Combination</div><div class="cell" style="left:104.6px">06/15/2010</div><div class="cell" style="left:154.2px">06/16/2010</div><div class="cell" style="left:199.2px">06/16/2010</div><div class="cell" style="left:244.0px">13123 CARRIAGE ...</div><div class="cell" style="left:324.0px">DONE</div><div class="cell" style="left:420.1px">CWL</div><div class="cell" style="left:484.1px"></div><div class="cell" style="left:644.0px">Optional</div><div class="cell lnk" style="left:706.4px">10HIS-00000-02NX2</div><div class="cell" style="left:780.2px">348410</div></div>
<div class="row" style="top:300.72px"><div class="cb"></div><div class="cell lnk" style="left:24.7px">Fire Sprinkler ...</div><div class="cell" style="left:104.6px">06/15/2010</div><div class="cell" style="left:154.2px">06/16/2010</div><div class="cell" style="left:199.2px">06/16/2010</div><div class="cell" style="left:244.0px">13123 CARRIAGE ...</div><div class="cell" style="left:324.0px">DONE</div><div class="cell" style="left:420.1px">CWL</div><div class="cell" style="left:484.1px"></div><div class="cell" style="left:644.0px">Optional</div><div class="cell lnk" style="left:706.4px">10HIS-00000-02NX2</div><div class="cell" style="left:780.2px">348411</div></div>
<div class="row alt" style="top:321.50px"><div class="cb"></div><div class="cell lnk" style="left:24.7px">Framing/Roofing</div><div class="cell" style="left:104.6px">06/12/2010</div><div class="cell" style="left:154.2px">06/14/2010</div><div class="cell" style="left:199.2px">06/14/2010</div><div class="cell" style="left:244.0px">13123 CARRIAGE ...</div><div class="cell" style="left:324.0px">UFND</div><div class="cell" style="left:420.1px">PAR</div><div class="cell" style="left:484.1px">Contact phone: 9099944346</div><div class="cell" style="left:644.0px">Optional</div><div class="cell lnk" style="left:706.4px">10HIS-00000-02NX2</div><div class="cell" style="left:780.2px">348122</div></div>
<div class="row" style="top:342.28px"><div class="cb"></div><div class="cell lnk" style="left:24.7px">Roof Sheathing,...</div><div class="cell" style="left:104.6px">05/18/2010</div><div class="cell" style="left:154.2px">05/19/2010</div><div class="cell" style="left:199.2px">05/18/2010</div><div class="cell" style="left:244.0px">13123 CARRIAGE ...</div><div class="cell" style="left:324.0px">DONE</div><div class="cell" style="left:420.1px">MDF</div><div class="cell" style="left:484.1px"></div><div class="cell" style="left:644.0px">Optional</div><div class="cell lnk" style="left:706.4px">10HIS-00000-02NX2</div><div class="cell" style="left:780.2px">349241</div></div>
<div class="row alt" style="top:363.06px"><div class="cb"></div><div class="cell lnk" style="left:24.7px">Exterior Lath</div><div class="cell" style="left:104.6px">05/17/2010</div><div class="cell" style="left:154.2px">05/18/2010</div><div class="cell" style="left:199.2px">05/18/2010</div><div class="cell" style="left:244.0px">13123 CARRIAGE ...</div><div class="cell" style="left:324.0px">DONE</div><div class="cell" style="left:420.1px">MDF</div><div class="cell" style="left:484.1px">Contact phone: 9099944346</div><div class="cell" style="left:644.0px">Optional</div><div class="cell lnk" style="left:706.4px">10HIS-00000-02NX2</div><div class="cell" style="left:780.2px">346131</div></div>
<div class="row" style="top:383.84px"><div class="cb"></div><div class="cell lnk" style="left:24.7px">Slab, Floor Joists</div><div class="cell" style="left:104.6px">04/23/2010</div><div class="cell" style="left:154.2px">04/27/2010</div><div class="cell" style="left:199.2px">04/23/2010</div><div class="cell" style="left:244.0px">13123 CARRIAGE ...</div><div class="cell" style="left:324.0px">DONE</div><div class="cell" style="left:420.1px">DRD</div><div class="cell" style="left:484.1px"></div><div class="cell" style="left:644.0px">Optional</div><div class="cell lnk" style="left:706.4px">10HIS-00000-02NX2</div><div class="cell" style="left:780.2px">347358</div></div>
<div class="row alt" style="top:404.62px"><div class="cb"></div><div class="cell lnk" style="left:24.7px">Foundation, Foo...</div><div class="cell" style="left:104.6px">04/24/2010</div><div class="cell" style="left:154.2px">04/26/2010</div><div class="cell" style="left:199.2px">04/26/2010</div><div class="cell" style="left:244.0px">13123 CARRIAGE ...</div><div class="cell" style="left:324.0px">DONE</div><div class="cell" style="left:420.1px">DRD</div><div class="cell" style="left:484.1px">Block wall footings.</div><div class="cell" style="left:644.0px">Optional</div><div class="cell lnk" style="left:706.4px">10HIS-00000-02NX2</div><div class="cell" style="left:780.2px">347359</div></div>
<div class="row" style="top:425.40px"><div class="cb"></div><div class="cell lnk" style="left:24.7px">Foundation, Foo...</div><div class="cell" style="left:104.6px">04/20/2010</div><div class="cell" style="left:154.2px">04/23/2010</div><div class="cell" style="left:199.2px">04/23/2010</div><div class="cell" style="left:244.0px">13123 CARRIAGE ...</div><div class="cell" style="left:324.0px">DONE</div><div class="cell" style="left:420.1px">DRD</div><div class="cell" style="left:484.1px">Contact phone: 9099944346</div><div class="cell" style="left:644.0px">Optional</div><div class="cell lnk" style="left:706.4px">10HIS-00000-02NX2</div><div class="cell" style="left:780.2px">347324</div></div>
<div class="a" style="left:181.2px;top:540.2px;width:842.8px;height:8px;background:#f1f1f1"></div>
<div class="a" style="left:190.8px;top:540.9px;width:768.2px;height:6.9px;background:#c1c1c1"></div>
<svg class="a" style="left:184.6px;top:542.2px" width="3" height="4" viewBox="0 0 3 4"><path d="M3 0 L0.5 2 L3 4 Z" fill="#a3a3a3"/></svg>
<svg class="a" style="left:1018px;top:542px" width="3.5" height="4.5" viewBox="0 0 3.5 4.5"><path d="M0 0 L3 2.25 L0 4.5 Z" fill="#505050"/></svg>
<div class="a" style="left:181px;top:548px;width:843px;height:2px;background:#fff"></div>
<div class="a" style="left:53px;top:63px;width:971px;height:1px;background:#f3f3f3"></div>
<div class="a" style="left:777px;top:526.3px;font-size:21px;color:rgba(255,255,255,0.8);letter-spacing:0.2px;line-height:22px">CRIMEO</div>
</body></html>
